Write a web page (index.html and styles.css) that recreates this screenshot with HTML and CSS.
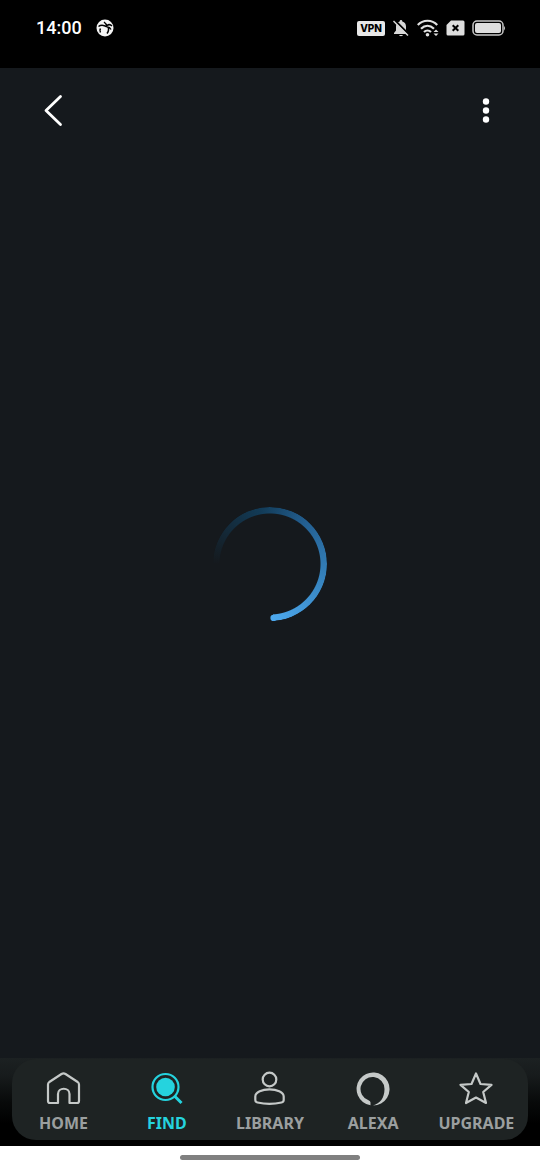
FILE: index.html
```html
<!DOCTYPE html>
<html lang="en">
<head>
<meta charset="utf-8">
<meta name="viewport" content="width=device-width, initial-scale=1">
<title>Find</title>
<link rel="stylesheet" href="styles.css">
</head>
<body>
<header class="status">
  <div class="status-group">
    <span class="clock">14:00</span>
    <svg class="ball" width="18" height="18" viewBox="0 0 18 18" aria-hidden="true">
      <circle cx="9" cy="9" r="8.5" fill="#f4f4f4"/>
      <path d="M2.500 7.500C5 5.500 8 6 11 8M8 3C9.500 4 10.500 5.500 11 7.500M11 6.500C13 5 14.500 5.500 16 7M4.500 9.500C3.500 11 3.500 12 4.500 13.500M12 8C13 10 12.500 12.500 11 14.500M11 8C12.500 7.800 14 8.500 15 10.500" fill="none" stroke="#000" stroke-width="1.500"/>
    </svg>
  </div>
  <div class="status-icons">
    <span class="vpn">VPN</span>
    <svg width="18" height="18" viewBox="0 0 18 18" aria-hidden="true">
      <path d="M9 1C9.800 1 10.300 1.600 10.300 2.400C12.800 3 14 5 14 7.500V11.500L16 14V15H2V14L4 11.500V7.500C4 5 5.200 3 7.700 2.400C7.700 1.600 8.200 1 9 1ZM7 16H11C10.600 17.500 7.400 17.500 7 16Z" fill="#d8d8d8"/>
      <path d="M2.500 1L17 15.500" stroke="#000" stroke-width="2"/>
      <path d="M1.500 2L16 16.500" stroke="#d8d8d8" stroke-width="1.500"/>
    </svg>
    <svg width="22" height="18" viewBox="0 0 22 18" aria-hidden="true">
      <g fill="none" stroke="#e0e0e0" stroke-width="2.200">
        <path d="M.8 6C6 .3 15 .3 20.200 6"/>
        <path d="M4 9.800C8 5.800 13 5.800 17 9.800"/>
        <path d="M7 13C9 11 12 11 14 13"/>
      </g>
      <circle cx="10.500" cy="15.700" r="1.800" fill="#e0e0e0"/>
      <path d="M16.500 13L19 10.500L21.500 13ZM16.500 14.500H21.500L19 17Z" fill="#e0e0e0"/>
    </svg>
    <svg width="19" height="16" viewBox="0 0 19 16" aria-hidden="true">
      <path d="M5 .5H17Q18.500 .5 18.500 2V14Q18.500 15.500 17 15.500H2Q.5 15.500 .5 14V5Z" fill="#dedede"/>
      <path d="M6.700 5.200L12.300 10.800M12.300 5.200L6.700 10.800" stroke="#000" stroke-width="2"/>
    </svg>
    <svg width="34" height="16" viewBox="0 0 34 16" aria-hidden="true">
      <rect x="1" y="1" width="30" height="14" rx="4" fill="none" stroke="#c8c8c8" stroke-width="1.500"/>
      <rect x="3" y="3" width="26" height="10" rx="2" fill="#dedede"/>
      <path d="M32 6Q34 8 32 10.500Z" fill="#c8c8c8"/>
    </svg>
  </div>
</header>
<div class="toolbar">
  <button class="tool" type="button" aria-label="Back">
    <svg width="40" height="40" viewBox="0 0 40 40"><path d="M26.500 6.500L12 20.500L26.500 34.500" fill="none" stroke="#fff" stroke-width="2.800" stroke-linecap="round" stroke-linejoin="round"/></svg>
  </button>
  <button class="tool" type="button" aria-label="More options">
    <svg width="40" height="40" viewBox="0 0 40 40" fill="#fff"><circle cx="20" cy="11.500" r="3.200"/><circle cx="20" cy="20.500" r="3.200"/><circle cx="20" cy="29.500" r="3.200"/></svg>
  </button>
</div>
<main class="content">
  <div class="spinner" role="progressbar" aria-label="Loading">
    <svg width="114" height="114" viewBox="0 0 114 114"><circle cx="60.500" cy="110.900" r="3.100" fill="#4da9ee"/></svg>
  </div>
</main>
<div class="dock">
  <nav class="tabs">
    <a class="tab" href="#home">
      <svg width="36" height="36" viewBox="0 0 36 36"><path d="M2 13.500Q2 12 3.300 11L15.500 3Q17.500 1.800 19.500 3L31.700 11Q33 12 33 13.500V30Q33 32 31 32H23.500V23C23.500 16 12 16 12 23V32H4Q2 32 2 30Z"/></svg>
      <span>HOME</span>
    </a>
    <a class="tab active" href="#find" aria-current="page">
      <svg width="36" height="36" viewBox="0 0 36 36"><circle cx="16.500" cy="16" r="13"/><circle cx="16.500" cy="16" r="9.300" fill="#25d3de" stroke="none"/><path d="M25.500 25L32.500 32" stroke-width="3"/></svg>
      <span>FIND</span>
    </a>
    <a class="tab" href="#library">
      <svg width="36" height="36" viewBox="0 0 36 36"><circle cx="17.500" cy="8.500" r="6.800"/><path d="M3.300 25.500C3.300 16 31.700 16 31.700 25.500V29Q31.700 31 29.500 31.500C21.500 33.300 13.500 33.300 5.500 31.500Q3.300 31 3.300 29Z"/></svg>
      <span>LIBRARY</span>
    </a>
    <a class="tab" href="#alexa">
      <svg width="36" height="36" viewBox="0 0 36 36"><path d="M15.500 34.300A16.500 16.500 0 1 1 18 34.500C25 32.500 29.500 27 29.500 18A12 12 0 1 0 13.500 29.300Q15.500 30 15.500 31.500Z" fill="#c5c9c8" stroke="none"/></svg>
      <span>ALEXA</span>
    </a>
    <a class="tab" href="#upgrade">
      <svg width="36" height="36" viewBox="0 0 36 36"><path d="M18 2.500L22.500 13L33.500 13.800L25.200 21L28 32L18 26.500L8 32L10.800 21L2.500 13.800L13.500 13Z"/></svg>
      <span>UPGRADE</span>
    </a>
  </nav>
</div>
<footer class="gesture"><div class="handle"></div></footer>
</body>
</html>
```
FILE: styles.css
```css
* { box-sizing: border-box; }

body {
  margin: 0;
  min-height: 100vh;
  display: flex;
  flex-direction: column;
  background: #15191d;
  color: #fff;
  font-family: "Noto Sans", "Open Sans", sans-serif;
}

svg { display: block; flex: none; }

.status {
  display: flex;
  justify-content: space-between;
  align-items: flex-start;
  height: 68px;
  padding: 16px 34px 0 36px;
  background: #000;
}

.status-group,
.status-icons {
  display: flex;
  align-items: center;
  height: 24px;
}

.status-group { gap: 14px; }
.status-icons { gap: 7px; }

.clock {
  font: 500 18px/24px Roboto, sans-serif;
}

.vpn {
  padding: 0 3px;
  border-radius: 2px;
  background: #e8e8e8;
  color: #000;
  font: 800 10px/15px Inter, sans-serif;
}

.toolbar {
  display: flex;
  justify-content: space-between;
  padding: 22px 34px;
}

.tool {
  padding: 0;
  border: 0;
  background: none;
  cursor: pointer;
}

.content {
  flex: 1;
  display: grid;
  place-items: center;
  padding-bottom: 82px;
}

.spinner { position: relative; }

.spinner::before {
  content: "";
  position: absolute;
  inset: 0;
  border-radius: 50%;
  background: conic-gradient(from 270deg, #15191d 0deg, #123b57 80deg, #235f91 130deg, #3480ba 190deg, #4da9ee 267deg, transparent 267deg);
  mask: radial-gradient(circle closest-side, transparent 50px, #000 51px);
}

.dock {
  padding: 1px 12px 6px;
  background: linear-gradient(#1c2122, #171b1c 20%, #080a0a 50%, #000 75%);
}

.tabs {
  display: grid;
  grid-template-columns: repeat(5, 1fr);
  border-radius: 24px;
  background: #1e2323;
}

.tab {
  display: flex;
  flex-direction: column;
  align-items: center;
  gap: 5px;
  padding: 12px 0 5px;
  color: #9b9f9f;
  font-size: 16px;
  font-weight: 700;
  line-height: 23px;
  text-decoration: none;
}

.tab svg {
  fill: none;
  stroke: #c5c9c8;
  stroke-width: 2.2;
  stroke-linejoin: round;
}

.tab.active { color: #25d3de; }
.tab.active svg { stroke: #25d3de; }

.gesture {
  display: flex;
  justify-content: center;
  padding: 9px 0 10px;
  background: #fff;
}

.handle {
  width: 33.333%;
  height: 5px;
  border-radius: 3px;
  background: #808080;
}
```
